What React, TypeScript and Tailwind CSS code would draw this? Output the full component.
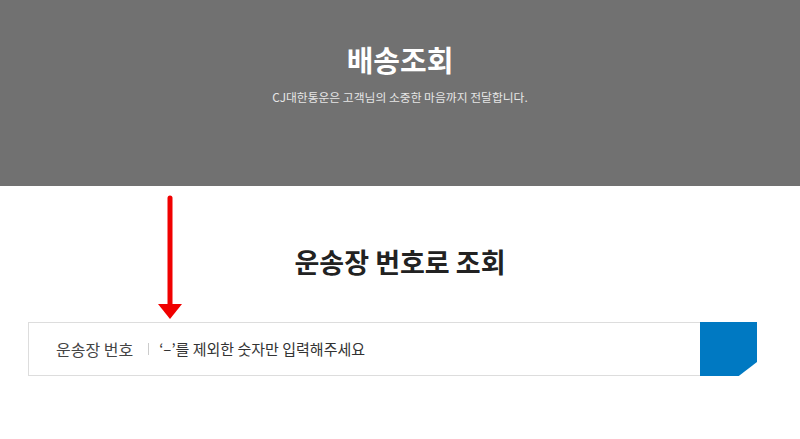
import React from "react";

const font = { fontFamily: '"Noto Sans CJK KR", "Noto Sans", sans-serif' };

export default function App() {
  return (
    <div className="relative w-[800px] h-[439px] bg-white overflow-hidden" style={font}>
      <div className="h-[186px] bg-[#717171] flex flex-col items-center pt-[37px]">
        <h1 className="text-[29px] leading-[44px] font-bold text-white">배송조회</h1>
        <p className="mt-[7px] text-[11.8px] leading-[17px] text-[#e6e6e6]">
          CJ대한통운은 고객님의 소중한 마음까지 전달합니다.
        </p>
      </div>

      <h2 className="mt-[57px] text-center text-[27px] leading-[38px] font-bold text-[#222]">
        운송장 번호로 조회
      </h2>

      <div className="mt-[41px] ml-[28px] w-[729px] flex h-[54px]">
        <div className="flex-1 flex items-center border border-[#dddddd] border-r-0 pl-[27px]">
          <span className="text-[16px] text-[#444]">운송장 번호</span>
          <span className="ml-[15px] w-px h-[12px] bg-[#cccccc]" />
          <span className="ml-[10px] text-[15px] text-[#333]">‘–’를 제외한 숫자만 입력해주세요</span>
        </div>
        <button
          className="w-[57px] h-[54px] bg-[#0079c2]"
          style={{ clipPath: "polygon(0 0, 100% 0, 100% 74%, 68% 100%, 0 100%)" }}
          aria-label="조회"
        />
      </div>

      <svg
        className="absolute left-[157px] top-[194px]"
        width="26"
        height="126"
        viewBox="0 0 26 126"
      >
        <line x1="13" y1="4" x2="13" y2="112" stroke="#f00000" strokeWidth="5" strokeLinecap="round" />
        <polygon points="1,110 25,110 13,125" fill="#f00000" />
      </svg>
    </div>
  );
}
